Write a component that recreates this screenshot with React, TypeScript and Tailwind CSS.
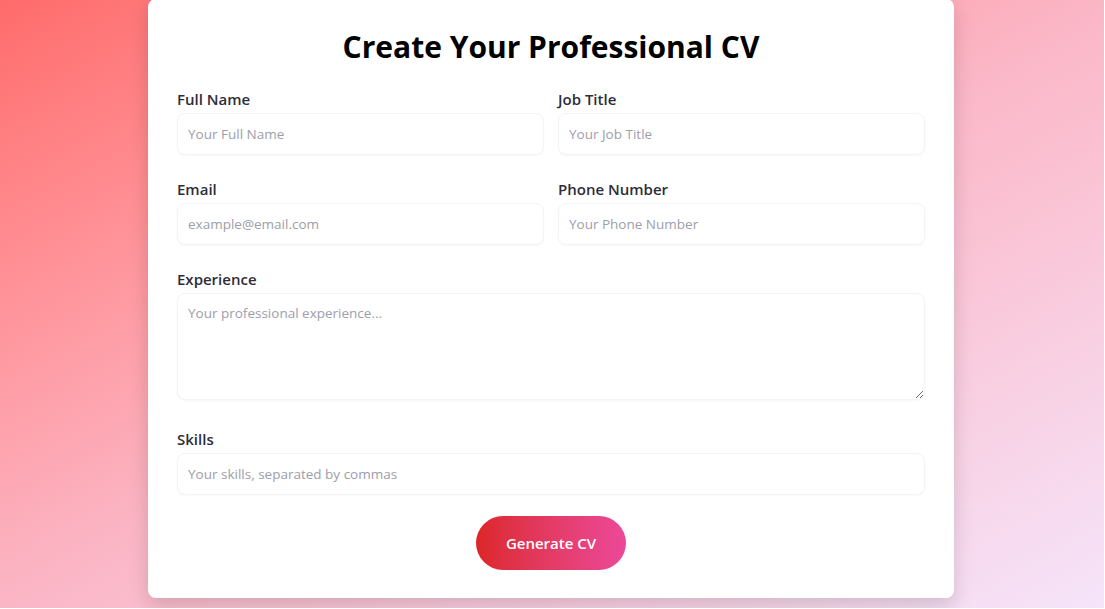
export default function App() {
  const inputCls =
    "block w-full h-[42px] rounded-lg border border-[#f4f4f6] bg-white px-[10px] text-[13.5px] text-gray-800 placeholder:text-[#9d9dab] shadow-[0_1px_2px_rgba(0,0,0,0.03)] outline-none";
  const labelCls = "block text-[15px] leading-[22px] font-semibold text-[#2d2d3a] mb-[3px]";

  return (
    <div className="bg-white w-full h-[609px] overflow-hidden" style={{ fontFamily: '"Open Sans", sans-serif' }}>
      <div className="w-[1104px] h-[608px] overflow-hidden flex flex-col justify-end items-center pr-[2px] pb-[10px] bg-linear-to-br from-[#ff6b6b] via-[#fbb6c6] to-[#f5e4fa]">
        <div className="w-[806px] shrink-0 bg-white rounded-lg shadow-[0_8px_20px_rgba(0,0,0,0.15)] px-[29px] pt-[30px] pb-[28px]">
          <h1 className="text-center text-[30px] leading-[36px] font-bold text-black mb-[23px]">
            Create Your Professional CV
          </h1>

          <div className="grid grid-cols-2 gap-x-[14px]">
            <div className="mb-[23px]">
              <label className={labelCls}>Full Name</label>
              <input className={inputCls} placeholder="Your Full Name" />
            </div>
            <div className="mb-[23px]">
              <label className={labelCls}>Job Title</label>
              <input className={inputCls} placeholder="Your Job Title" />
            </div>
            <div className="mb-[23px]">
              <label className={labelCls}>Email</label>
              <input className={inputCls} placeholder="example@email.com" />
            </div>
            <div className="mb-[23px]">
              <label className={labelCls}>Phone Number</label>
              <input className={inputCls} placeholder="Your Phone Number" />
            </div>
          </div>

          <div className="mb-[28px]">
            <label className={labelCls}>Experience</label>
            <textarea
              className="block w-full h-[107px] rounded-lg border border-[#f4f4f6] bg-white px-[10px] py-[9px] text-[13.5px] text-gray-800 placeholder:text-[#9d9dab] shadow-[0_1px_2px_rgba(0,0,0,0.03)] outline-none resize-y"
              placeholder="Your professional experience..."
            />
          </div>

          <div className="mb-[21px]">
            <label className={labelCls}>Skills</label>
            <input className={inputCls} placeholder="Your skills, separated by commas" />
          </div>

          <div className="flex justify-center">
            <button className="w-[150px] h-[54px] rounded-full bg-linear-to-r from-[#dc2626] to-[#ec4899] text-white text-[15px] font-semibold">
              Generate CV
            </button>
          </div>
        </div>
      </div>
    </div>
  );
}
